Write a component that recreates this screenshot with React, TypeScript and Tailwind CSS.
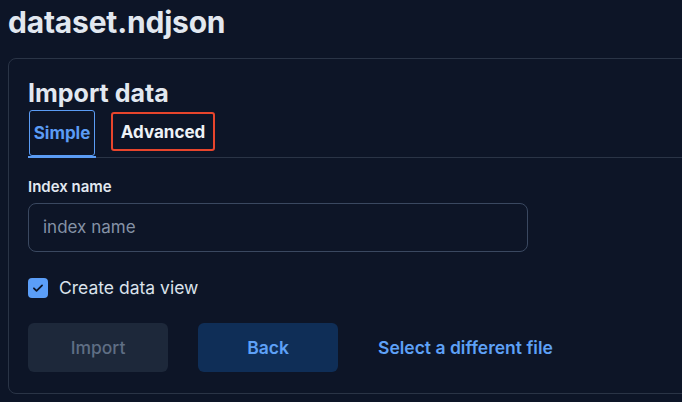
import React from "react";

export default function App() {
  return (
    <div className="min-h-screen w-[682px] h-[402px] overflow-hidden bg-[#0d1527] pl-2 pt-[2px] text-[#e2e8f0]" style={{ fontFamily: "Inter, 'Liberation Sans', sans-serif" }}>
      <h1 className="text-[30px] font-bold leading-[40px] tracking-[-0.2px]">dataset.ndjson</h1>
      <div className="mt-[16px] h-[336px] w-[720px] rounded-lg border border-[#2a3446] pl-[19px] pt-[18px]">
        <h2 className="text-[25px] font-bold leading-[33px]">Import data</h2>
        <div className="flex items-end border-b border-[#2a3446] h-[48px] mr-0">
          <div className="relative -mb-px flex h-[48px] flex-col">
            <div className="flex h-[46px] w-[66px] ml-[1px] items-center justify-center rounded-[3px] border-[1.5px] border-[#5b9cf5] pt-[2px] text-[17px] font-bold text-[#5b9cf5]">Simple</div>
            <div className="h-[2px] w-[68px] bg-[#5b9cf5]" />
          </div>
          <div className="ml-[15px] mb-[6px] flex h-[39px] w-[104px] items-center justify-center rounded-[3px] border-2 border-[#e8452c] pt-[2px] text-[17px] font-bold text-[#eef2f7]">Advanced</div>
        </div>
        <div className="mt-[20px] text-[15px] font-semibold leading-[18px] text-[#e2e8f0]">Index name</div>
        <div className="mt-[7px] flex h-[49px] w-[500px] items-center rounded-lg border border-[#3a4860] px-[14px] pt-[1px] text-[17px] text-[#8592a6]">index name</div>
        <div className="mt-[26px] flex items-center gap-[11px]">
          <div className="flex h-[20px] w-[20px] items-center justify-center rounded-[4px] bg-[#5b9ef8]">
            <svg width="14" height="14" viewBox="0 0 24 24" fill="none" stroke="#0d1527" strokeWidth="3" strokeLinecap="round" strokeLinejoin="round"><path d="M5 12.5l4.5 4.5L19 7.5" /></svg>
          </div>
          <span className="text-[17.5px] leading-[20px] text-[#dbe2ec]">Create data view</span>
        </div>
        <div className="mt-[25px] flex items-center">
          <div className="flex h-[49px] w-[140px] items-center justify-center rounded-md bg-[#1d283a] pt-[2px] text-[17.5px] font-medium text-[#5f6e84]">Import</div>
          <div className="ml-[30px] flex h-[49px] w-[140px] items-center justify-center rounded-md bg-[#0f2e57] pt-[2px] text-[17.5px] font-semibold text-[#5ea1f7]">Back</div>
          <div className="ml-[40px] pt-[2px] text-[17.5px] font-semibold text-[#5ea1f7]">Select a different file</div>
        </div>
      </div>
    </div>
  );
}
